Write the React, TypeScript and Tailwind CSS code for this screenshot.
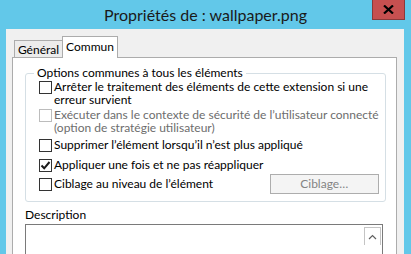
import React from "react"

const font = { fontFamily: 'Lato, "Noto Sans", sans-serif' }

function Check({ checked, disabled }: { checked?: boolean; disabled?: boolean }) {
  return (
    <span
      className={`mt-[1px] flex h-[13px] w-[13px] shrink-0 items-center justify-center border bg-white ${
        disabled ? "border-[#bcbcbc]" : "border-[#333333]"
      }`}
    >
      {checked && (
        <svg width="11" height="11" viewBox="0 0 11 11">
          <path d="M1.5 5.5 L4.2 8.3 L9.5 2" fill="none" stroke="#1a1a1a" strokeWidth="2" />
        </svg>
      )}
    </span>
  )
}

function Option({
  label,
  checked,
  disabled,
}: {
  label: React.ReactNode
  checked?: boolean
  disabled?: boolean
}) {
  return (
    <div className="flex items-start gap-[2px]">
      <Check checked={checked} disabled={disabled} />
      <span className={`whitespace-nowrap leading-[13px] ${disabled ? "text-[#6d6d6d]" : "text-black"}`}>{label}</span>
    </div>
  )
}

export default function App() {
  return (
    <div className="flex h-[254px] w-[411px] flex-col overflow-hidden bg-[#62c8e9] whitespace-nowrap" style={font}>
      {/* Title bar */}
      <div className="relative flex h-[29px] shrink-0 items-center justify-center">
        <span className="text-[16px] text-[#1a1a1a]">Propriétés de : wallpaper.png</span>
        <div className="absolute right-[6px] top-0 flex h-[20px] w-[33px] items-center justify-center border border-t-0 border-[#8a3a3a] bg-[#c75050]">
          <svg width="11" height="9" viewBox="0 0 11 9">
            <path d="M1 0.5 L10 8.5 M10 0.5 L1 8.5" stroke="#000" strokeWidth="2.2" />
          </svg>
        </div>
      </div>

      {/* Client area */}
      <div className="ml-[6px] mr-[7px] flex flex-1 flex-col bg-[#f0f0f0] pl-[6px] pr-[7px] pt-[8px] text-[12px]">
        {/* Tabs */}
        <div className="flex h-[20px] items-end pl-[2px]">
          <div className="mb-[-1px] flex h-[18px] w-[48px] items-center justify-center border border-b-0 border-r-0 border-[#acacac] bg-[#ececec] text-black">
            Général
          </div>
          <div className="relative z-10 mb-[-1px] flex h-[22px] w-[56px] items-start justify-center border border-b-0 border-[#acacac] bg-white pt-[1px] text-black">
            Commun
          </div>
        </div>

        {/* Panel */}
        <div className="flex flex-1 flex-col border border-b-0 border-[#acacac] bg-white pl-[12px] pr-[13px] pt-[8px]">
          <fieldset className="rounded-[3px] border border-[#d5dfe5] pb-[7px] pl-[13px] pr-[6px]">
            <legend className="ml-[-5px] px-[3px] leading-[14px] text-black">
              Options communes à tous les éléments
            </legend>
            <div className="flex flex-col">
              <Option
                label={
                  <>
                    Arrêter le traitement des éléments de cette extension si une
                    <br />
                    erreur survient
                  </>
                }
              />
              <div className="mt-[2px]">
                <Option
                  disabled
                  label={
                    <>
                      Exécuter dans le contexte de sécurité de l’utilisateur connecté
                      <br />
                      (option de stratégie utilisateur)
                    </>
                  }
                />
              </div>
              <div className="mt-[4px]">
                <Option label="Supprimer l’élément lorsqu’il n’est plus appliqué" />
              </div>
              <div className="mt-[6px]">
                <Option checked label="Appliquer une fois et ne pas réappliquer" />
              </div>
              <div className="mt-[2px] flex items-center justify-between">
                <Option label="Ciblage au niveau de l’élément" />
                <div className="flex h-[20px] w-[109px] items-center justify-center border border-[#adadad] bg-[#f4f4f4] text-[#838383]">
                  Ciblage…
                </div>
              </div>
            </div>
          </fieldset>

          <div className="mt-[4px] text-black">Description</div>
          <div className="mt-[0px] flex flex-1 justify-end border border-b-0 border-[#7a7a7a] pr-[1px] pt-[2px]">
            <div className="flex h-[18px] w-[17px] items-center justify-center border border-b-0 border-[#c4c4c4] bg-white">
              <svg width="9" height="6" viewBox="0 0 9 6">
                <path d="M1 5 L4.5 1.5 L8 5" fill="none" stroke="#606060" strokeWidth="1.2" />
              </svg>
            </div>
          </div>
        </div>
      </div>
    </div>
  )
}
